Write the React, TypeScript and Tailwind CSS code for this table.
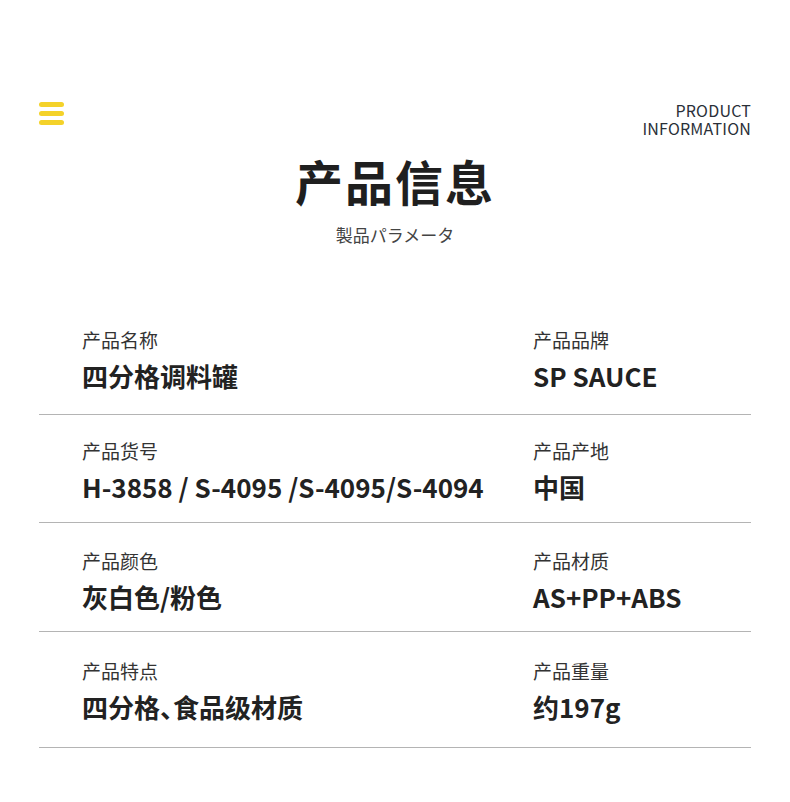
const rows = [
  [
    { label: '产品名称', value: '四分格调料罐' },
    { label: '产品品牌', value: 'SP SAUCE' },
  ],
  [
    { label: '产品货号', value: 'H-3858 / S-4095 /S-4095/S-4094' },
    { label: '产品产地', value: '中国' },
  ],
  [
    { label: '产品颜色', value: '灰白色/粉色' },
    { label: '产品材质', value: 'AS+PP+ABS' },
  ],
  [
    { label: '产品特点', value: '四分格、食品级材质' },
    { label: '产品重量', value: '约197g' },
  ],
]

// row sizes differ slightly in the original layout
const rowClass = ['h-[87px]', 'h-[108px] pt-[24px]', 'h-[109px] pt-[26px]', 'h-[116px] pt-[27px]']

function Value({ text }: { text: string }) {
  const parts = text.split('、')
  return (
    <p className="mt-[8px] text-[26px] leading-[32px] font-bold text-[#222]">
      {parts.map((p, i) => (
        <span key={i}>
          {i > 0 && <span className="[font-feature-settings:'halt']">、</span>}
          {p}
        </span>
      ))}
    </p>
  )
}

function Cell({ label, value }: { label: string; value: string }) {
  return (
    <div>
      <p className="text-[19px] leading-[24px] text-[#333]">{label}</p>
      <Value text={value} />
    </div>
  )
}

export default function App() {
  return (
    <div
      className="w-[790px] h-[802px] bg-white"
      style={{ fontFamily: '"Noto Sans CJK SC", "Noto Sans", sans-serif' }}
    >
      <div className="flex justify-between px-[39px] pt-[101px]">
        <div className="flex flex-col gap-[4px] pt-[1px]">
          <span className="block w-[25px] h-[5px] rounded-full bg-[#f4d22a]" />
          <span className="block w-[25px] h-[5px] rounded-full bg-[#f4d22a]" />
          <span className="block w-[25px] h-[5px] rounded-full bg-[#f4d22a]" />
        </div>
        <div className="text-right text-[16px] leading-[18px] tracking-[0.2px] text-[#2a2f38]">
          <p>PRODUCT</p>
          <p>INFORMATION</p>
        </div>
      </div>

      <div className="mt-[15px] text-center">
        <h1 className="text-[48px] leading-[56px] font-bold text-[#1f1f1f] tracking-[2px]">产品信息</h1>
        <p className="mt-[17px] text-[17px] leading-[20px] text-[#444]">製品パラメータ</p>
      </div>

      <div className="mx-[39px] mt-[83px]">
        {rows.map((row, i) => (
          <div key={i} className={`flex border-b border-[#b4b4b4] pl-[43px] ${rowClass[i]}`}>
            <div className="w-[451px]">
              <Cell {...row[0]} />
            </div>
            <div>
              <Cell {...row[1]} />
            </div>
          </div>
        ))}
      </div>
    </div>
  )
}
